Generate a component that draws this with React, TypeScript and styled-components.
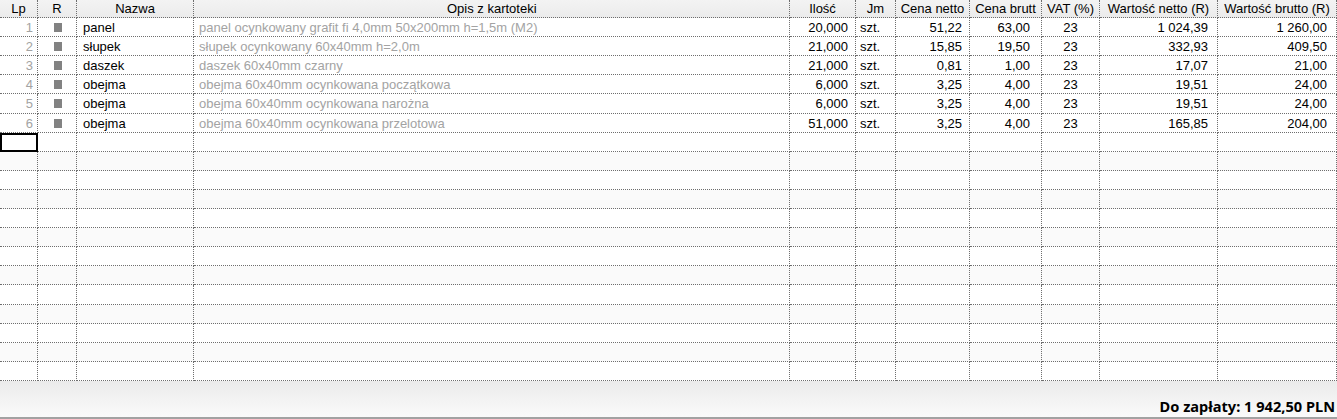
import React from "react";
import styled, { createGlobalStyle, css } from "styled-components";

const Global = createGlobalStyle`
  html, body { margin: 0; padding: 0; background: #fff; }
  body { font-family: "Liberation Sans", Arial, sans-serif; }
  #root { width: 1337px; height: 419px; }
`;

const COLS = "38px 39px 117px 596px 66px 40px 74px 72px 58px 118px 119px";

const Page = styled.div`
  width: 1337px;
  height: 419px;
  display: flex;
  flex-direction: column;
  overflow: hidden;
`;

const Grid = styled.div`
  display: flex;
  flex-direction: column;
  flex: 0 0 auto;
`;

const HeaderRow = styled.div`
  display: grid;
  grid-template-columns: ${COLS};
  height: 18px;
  background: linear-gradient(#f3f3f3, #ebebeb);
`;

const Body = styled.div`
  display: grid;
  grid-auto-rows: 1fr;
  height: 363px;
`;

const Row = styled.div<{ $alt?: boolean }>`
  display: grid;
  grid-template-columns: ${COLS};
  background: ${(p) => (p.$alt ? "#fafafa" : "#ffffff")};
`;

type Align = "left" | "right" | "center";

const cellBase = css`
  box-sizing: border-box;
  border-right: 1px dotted #6e6e6e;
  border-bottom: 1px dotted #6e6e6e;
  font-size: 13px;
  line-height: 17px;
  white-space: nowrap;
  overflow: hidden;
  display: flex;
  align-items: center;
`;

const HeadCell = styled.div<{ $pl?: number }>`
  ${cellBase};
  color: #000;
  padding: 0 2px 0 ${(p) => p.$pl ?? 2}px;
  justify-content: ${(p) => (p.$pl !== undefined ? "flex-start" : "center")};
`;

const Cell = styled.div<{
  $align?: Align;
  $muted?: boolean;
  $selected?: boolean;
  $pl?: number;
  $pr?: number;
}>`
  ${cellBase};
  padding: 1px ${(p) => p.$pr ?? 6}px 0 ${(p) => p.$pl ?? 6}px;
  color: ${(p) => (p.$muted ? "#a3a3a3" : "#000")};
  justify-content: ${(p) =>
    p.$align === "right" ? "flex-end" : p.$align === "center" ? "center" : "flex-start"};
  ${(p) =>
    p.$selected &&
    css`
      outline: 2px solid #000;
      outline-offset: -2px;
    `}
`;

const Marker = styled.span`
  display: inline-block;
  width: 8px;
  height: 9px;
  margin-left: 2px;
  background: #828282;
`;

const Footer = styled.div`
  flex: 1;
  box-sizing: border-box;
  border-bottom: 2px solid #a2a2a2;
  background: linear-gradient(#ebebeb, #f1f1f1 40%, #fafafa);
  display: flex;
  align-items: flex-end;
  justify-content: flex-end;
  padding: 0 2px 2px 0;
`;

const Total = styled.div`
  font-family: "Noto Sans", "Open Sans", sans-serif;
  font-weight: 700;
  font-size: 14.6px;
  line-height: 18px;
  color: #000;
`;

const headers: { t: string; pl?: number }[] = [
  { t: "Lp" },
  { t: "R" },
  { t: "Nazwa" },
  { t: "Opis z kartoteki", pl: 253 },
  { t: "Ilość" },
  { t: "Jm" },
  { t: "Cena netto" },
  { t: "Cena brutt" },
  { t: "VAT (%)" },
  { t: "Wartość netto (R)" },
  { t: "Wartość brutto (R)" },
];

const data = [
  ["1", "panel", "panel ocynkowany grafit fi 4,0mm 50x200mm h=1,5m (M2)", "20,000", "szt.", "51,22", "63,00", "23", "1 024,39", "1 260,00"],
  ["2", "słupek", "słupek ocynkowany 60x40mm h=2,0m", "21,000", "szt.", "15,85", "19,50", "23", "332,93", "409,50"],
  ["3", "daszek", "daszek 60x40mm czarny", "21,000", "szt.", "0,81", "1,00", "23", "17,07", "21,00"],
  ["4", "obejma", "obejma 60x40mm ocynkowana początkowa", "6,000", "szt.", "3,25", "4,00", "23", "19,51", "24,00"],
  ["5", "obejma", "obejma 60x40mm ocynkowana narożna", "6,000", "szt.", "3,25", "4,00", "23", "19,51", "24,00"],
  ["6", "obejma", "obejma 60x40mm ocynkowana przelotowa", "51,000", "szt.", "3,25", "4,00", "23", "165,85", "204,00"],
];

const TOTAL_ROWS = 19;

export default function App() {
  const empty = Array.from({ length: TOTAL_ROWS - data.length }, (_, i) => i);
  return (
    <Page>
      <Global />
      <Grid>
        <HeaderRow>
          {headers.map((h) => (
            <HeadCell key={h.t} $pl={h.pl}>
              {h.t}
            </HeadCell>
          ))}
        </HeaderRow>
        <Body>
          {data.map((r) => (
            <Row key={r[0]}>
              <Cell $align="right" $muted $pr={4}>{r[0]}</Cell>
              <Cell $align="center"><Marker /></Cell>
              <Cell $pl={6}>{r[1]}</Cell>
              <Cell $muted $pl={5}>{r[2]}</Cell>
              <Cell $align="right" $pr={7}>{r[3]}</Cell>
              <Cell $pl={4}>{r[4]}</Cell>
              <Cell $align="right" $pr={7}>{r[5]}</Cell>
              <Cell $align="right" $pr={11}>{r[6]}</Cell>
              <Cell $align="center">{r[7]}</Cell>
              <Cell $align="right" $pr={9}>{r[8]}</Cell>
              <Cell $align="right" $pr={9}>{r[9]}</Cell>
            </Row>
          ))}
          {empty.map((i) => (
            <Row key={"e" + i} $alt={i % 2 === 1}>
              {headers.map((h, c) => (
                <Cell key={h.t} $selected={i === 0 && c === 0} />
              ))}
            </Row>
          ))}
        </Body>
      </Grid>
      <Footer>
        <Total>Do zapłaty: 1 942,50 PLN</Total>
      </Footer>
    </Page>
  );
}
